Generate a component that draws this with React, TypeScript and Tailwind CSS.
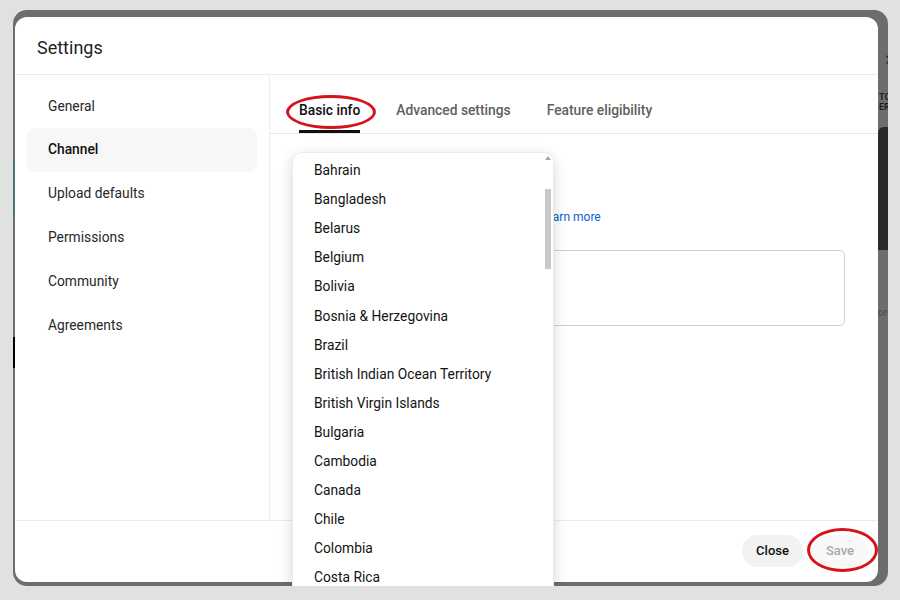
const navItems = ["General", "Channel", "Upload defaults", "Permissions", "Community", "Agreements"];

const tabs = ["Basic info", "Advanced settings", "Feature eligibility"];

const countries = [
  "Bahrain",
  "Bangladesh",
  "Belarus",
  "Belgium",
  "Bolivia",
  "Bosnia & Herzegovina",
  "Brazil",
  "British Indian Ocean Territory",
  "British Virgin Islands",
  "Bulgaria",
  "Cambodia",
  "Canada",
  "Chile",
  "Colombia",
  "Costa Rica",
  "Croatia",
];

function CountryMenu() {
  return (
    <div className="absolute left-[279px] top-[142px] w-[262px] h-[450px] bg-white rounded-t-[10px] border border-[#ececec] shadow-[0_4px_14px_rgba(0,0,0,0.16)] overflow-hidden">
      <div className="pt-[3px]">
        {countries.map((c) => (
          <div key={c} className="h-[29.07px] flex items-center pl-[21px] text-[13.8px] text-[#131313] whitespace-nowrap">
            {c}
          </div>
        ))}
      </div>
      {/* scrollbar */}
      <div className="absolute right-[2px] top-[3px] w-[6px] flex flex-col items-center">
        <div className="w-0 h-0 border-l-[3px] border-r-[3px] border-b-[4px] border-l-transparent border-r-transparent border-b-[#a8a8a8]" />
        <div className="mt-[29px] w-[6px] h-[80px] bg-[#c8c8c8]" />
      </div>
    </div>
  );
}

function Dialog() {
  return (
    <div className="mt-[7px] w-[863px] h-[565px] bg-white rounded-[12px] flex flex-col overflow-hidden">
      <div className="h-[58px] shrink-0 flex items-center pl-[22px] border-b border-[#ececec]">
        <h1 className="text-[18px] text-[#1f1f1f] pt-[3px]">Settings</h1>
      </div>

      <div className="flex-1 flex min-h-0">
        <nav className="w-[255px] shrink-0 border-r border-[#ececec] pt-[9px]">
          {navItems.map((item) => (
            <div
              key={item}
              className={
                item === "Channel"
                  ? "h-[43.8px] mx-[12px] rounded-[8px] bg-[#f7f7f7] flex items-center pl-[21px] text-[13.8px] font-medium text-[#0f0f0f]"
                  : "h-[43.8px] mx-[12px] flex items-center pl-[21px] text-[13.8px] text-[#282828]"
              }
            >
              {item}
            </div>
          ))}
        </nav>

        <div className="flex-1 flex flex-col">
          <div className="h-[59px] shrink-0 flex gap-[36px] pl-[29px] border-b border-[#e6e6e6]">
            {tabs.map((t, i) => (
              <div key={t} className="h-[58px] flex flex-col justify-between pt-[25px]">
                <span
                  className={
                    i === 0
                      ? "text-[13.8px] leading-[20px] font-medium text-[#0f0f0f]"
                      : "text-[13.8px] leading-[20px] font-medium text-[#606060]"
                  }
                >
                  {t}
                </span>
                <div className={i === 0 ? "h-[3px] bg-[#0f0f0f]" : "h-[3px]"} />
              </div>
            ))}
          </div>

          <div className="pl-[30px] pr-[33px]">
            <div className="h-[73px]" />
            <div className="h-[20px] flex items-center text-[12px] text-[#606060] whitespace-nowrap">
              <span className="inline-block w-[240px] overflow-hidden">Choose the country where you're based.</span>
              <span className="text-[#065fd4]">Learn more</span>
            </div>
            <div className="mt-[23px] h-[76px] rounded-[5px] border border-[#cfcfcf]" />
          </div>
        </div>
      </div>

      <div className="h-[62px] shrink-0 border-t border-[#ececec] flex items-center justify-end gap-[9px] pr-[10px] pb-[1px]">
        <button className="h-[32px] w-[61px] rounded-full bg-[#f2f2f2] text-[13px] font-medium text-[#0f0f0f]">Close</button>
        <button className="h-[32px] w-[56px] rounded-full bg-[#f8f8f8] text-[13px] font-medium text-[#a9a9a9]">Save</button>
      </div>
    </div>
  );
}

export default function App() {
  return (
    <div className="w-[900px] h-[600px] bg-[#dfe2e0] pt-[10px] pl-[13px] overflow-hidden font-['Roboto',sans-serif]">
      <div className="relative w-[875px] h-[576px] rounded-[14px] bg-[#6d6d6d] overflow-hidden flex items-start">
        {/* left sliver of page behind */}
        <div className="w-[2px] shrink-0 flex flex-col">
          <div className="h-[150px]" />
          <div className="h-[55px] bg-[#4b7375]" />
          <div className="h-[122px]" />
          <div className="h-[31px] bg-black" />
        </div>

        <Dialog />

        {/* right sliver of page behind */}
        <div className="flex-1 h-full overflow-hidden flex flex-col pt-[40px]">
          <div className="h-[20px] flex items-center pl-[6px] text-[15px] leading-none text-[#2a2a2a]">✕</div>
          <div className="mt-[22px] h-[10px] text-[9px] leading-[10px] font-bold text-[#1e1e1e] whitespace-nowrap pl-[1px]">TOP</div>
          <div className="h-[10px] text-[9px] leading-[10px] font-bold text-[#1e1e1e] whitespace-nowrap pl-[1px]">ERS</div>
          <div className="mt-[15px] h-[123px] bg-[#2c292c] rounded-tl-[6px]" />
          <div className="mt-[58px] h-[10px] text-[10px] leading-[10px] text-[#4a4a4a] whitespace-nowrap">or-</div>
        </div>

        <CountryMenu />

        {/* red annotation ellipses */}
        <div className="absolute left-[273px] top-[85px] w-[90px] h-[34px] rounded-[50%] border-[3px] border-[#d8121b]" />
        <div className="absolute left-[794px] top-[518px] w-[71px] h-[44px] rounded-[50%] border-[3px] border-[#d8121b]" />
      </div>
    </div>
  );
}
